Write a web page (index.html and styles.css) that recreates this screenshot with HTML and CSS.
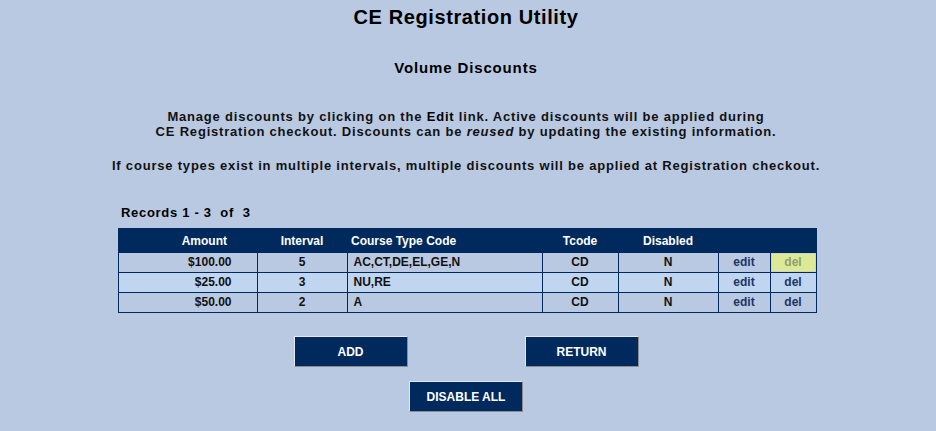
FILE: index.html
```html
<!DOCTYPE html>
<html>
<head>
<meta charset="utf-8">
<link rel="stylesheet" href="styles.css">
</head>
<body>
<div class="page">
  <h1 class="title">CE Registration Utility</h1>
  <h2 class="subtitle">Volume Discounts</h2>
  <p class="intro">Manage discounts by clicking on the <b>Edit</b> link. Active discounts will be applied during<br>CE Registration checkout. Discounts can be <i>reused</i> by updating the existing information.</p>
  <p class="intro note">If course types exist in multiple intervals, multiple discounts will be applied at Registration checkout.</p>

  <div class="records">Records 1 - 3&nbsp; of&nbsp; 3</div>
  <table class="grid">
    <colgroup>
      <col class="c-amount"><col class="c-interval"><col class="c-code"><col class="c-tcode"><col class="c-disabled"><col class="c-edit"><col class="c-del">
    </colgroup>
    <thead>
      <tr>
        <th class="h-amount">Amount</th>
        <th>Interval</th>
        <th class="h-code">Course Type Code</th>
        <th>Tcode</th>
        <th>Disabled</th>
        <th></th>
        <th></th>
      </tr>
    </thead>
    <tbody>
      <tr>
        <td class="amount">$100.00</td>
        <td>5</td>
        <td class="code">AC,CT,DE,EL,GE,N</td>
        <td>CD</td>
        <td>N</td>
        <td class="link">edit</td>
        <td class="link hot">del</td>
      </tr>
      <tr class="alt">
        <td class="amount">$25.00</td>
        <td>3</td>
        <td class="code">NU,RE</td>
        <td>CD</td>
        <td>N</td>
        <td class="link">edit</td>
        <td class="link">del</td>
      </tr>
      <tr>
        <td class="amount">$50.00</td>
        <td>2</td>
        <td class="code">A</td>
        <td>CD</td>
        <td>N</td>
        <td class="link">edit</td>
        <td class="link">del</td>
      </tr>
    </tbody>
  </table>

  <div class="actions">
    <button class="btn">ADD</button>
    <button class="btn">RETURN</button>
  </div>
  <div class="actions second">
    <button class="btn">DISABLE ALL</button>
  </div>
</div>
</body>
</html>
```
FILE: styles.css
```css
html, body {
  margin: 0;
  padding: 0;
  background: #b9c9e1;
}
body {
  font-family: "Liberation Sans", Arial, sans-serif;
  color: #000;
  font-weight: bold;
}
.page {
  display: flex;
  flex-direction: column;
  align-items: center;
  padding: 6px 4px 0 0;
}
.title {
  margin: 0;
  font-size: 20px;
  line-height: 23px;
  letter-spacing: 0.6px;
}
.subtitle {
  margin: 30px 0 0;
  font-size: 15px;
  line-height: 17px;
  letter-spacing: 0.85px;
}
.intro {
  margin: 33px 0 0;
  font-size: 13px;
  line-height: 15px;
  text-align: center;
  letter-spacing: 0.8px;
  color: #111;
}
.intro b {
  color: #000;
}
.intro.note {
  margin-top: 19px;
}
.records {
  align-self: flex-start;
  margin: 32px 0 0 121px;
  font-size: 13px;
  line-height: 15px;
  letter-spacing: 0.7px;
}
.grid {
  margin: 8px 0 0 2px;
  border-collapse: collapse;
  border: 1px solid #002a5e;
  font-size: 12px;
  width: 698px;
  table-layout: fixed;
}
.c-amount { width: 139px; }
.c-interval { width: 90px; }
.c-code { width: 195px; }
.c-tcode { width: 76px; }
.c-disabled { width: 100px; }
.c-edit { width: 52px; }
.c-del { width: 46px; }
.grid th {
  background: #002a5e;
  color: #fff;
  height: 23px;
  padding: 0;
  text-align: center;
  font-weight: bold;
}
.grid th.h-amount {
  text-align: right;
  padding-right: 30px;
}
.grid th.h-code {
  text-align: left;
  padding-left: 4px;
}
.grid td {
  border: 1px solid #002a5e;
  height: 19px;
  padding: 0;
  line-height: 19px;
  text-align: center;
  color: #111;
}
.grid td.amount {
  text-align: right;
  padding-right: 25px;
}
.grid td.code {
  text-align: left;
  padding-left: 6px;
}
.grid tr.alt td {
  background: #bfd5f0;
}
.grid td.link {
  color: #1b3566;
}
.grid td.hot {
  background: #dde997;
  color: #8f9f72;
  box-shadow: inset 0 0 0 1px #cdd7b0;
}
.actions {
  display: flex;
  gap: 117px;
  margin-top: 23px;
}
.actions.second {
  margin-top: 14px;
}
.btn {
  width: 114px;
  height: 31px;
  background: #002a5e;
  color: #fff;
  font-family: "Liberation Sans", Arial, sans-serif;
  font-weight: bold;
  font-size: 12px;
  border: 1px solid;
  border-color: #e4e9f1 #8d8d8d #8d8d8d #e4e9f1;
  padding: 0;
}
```
